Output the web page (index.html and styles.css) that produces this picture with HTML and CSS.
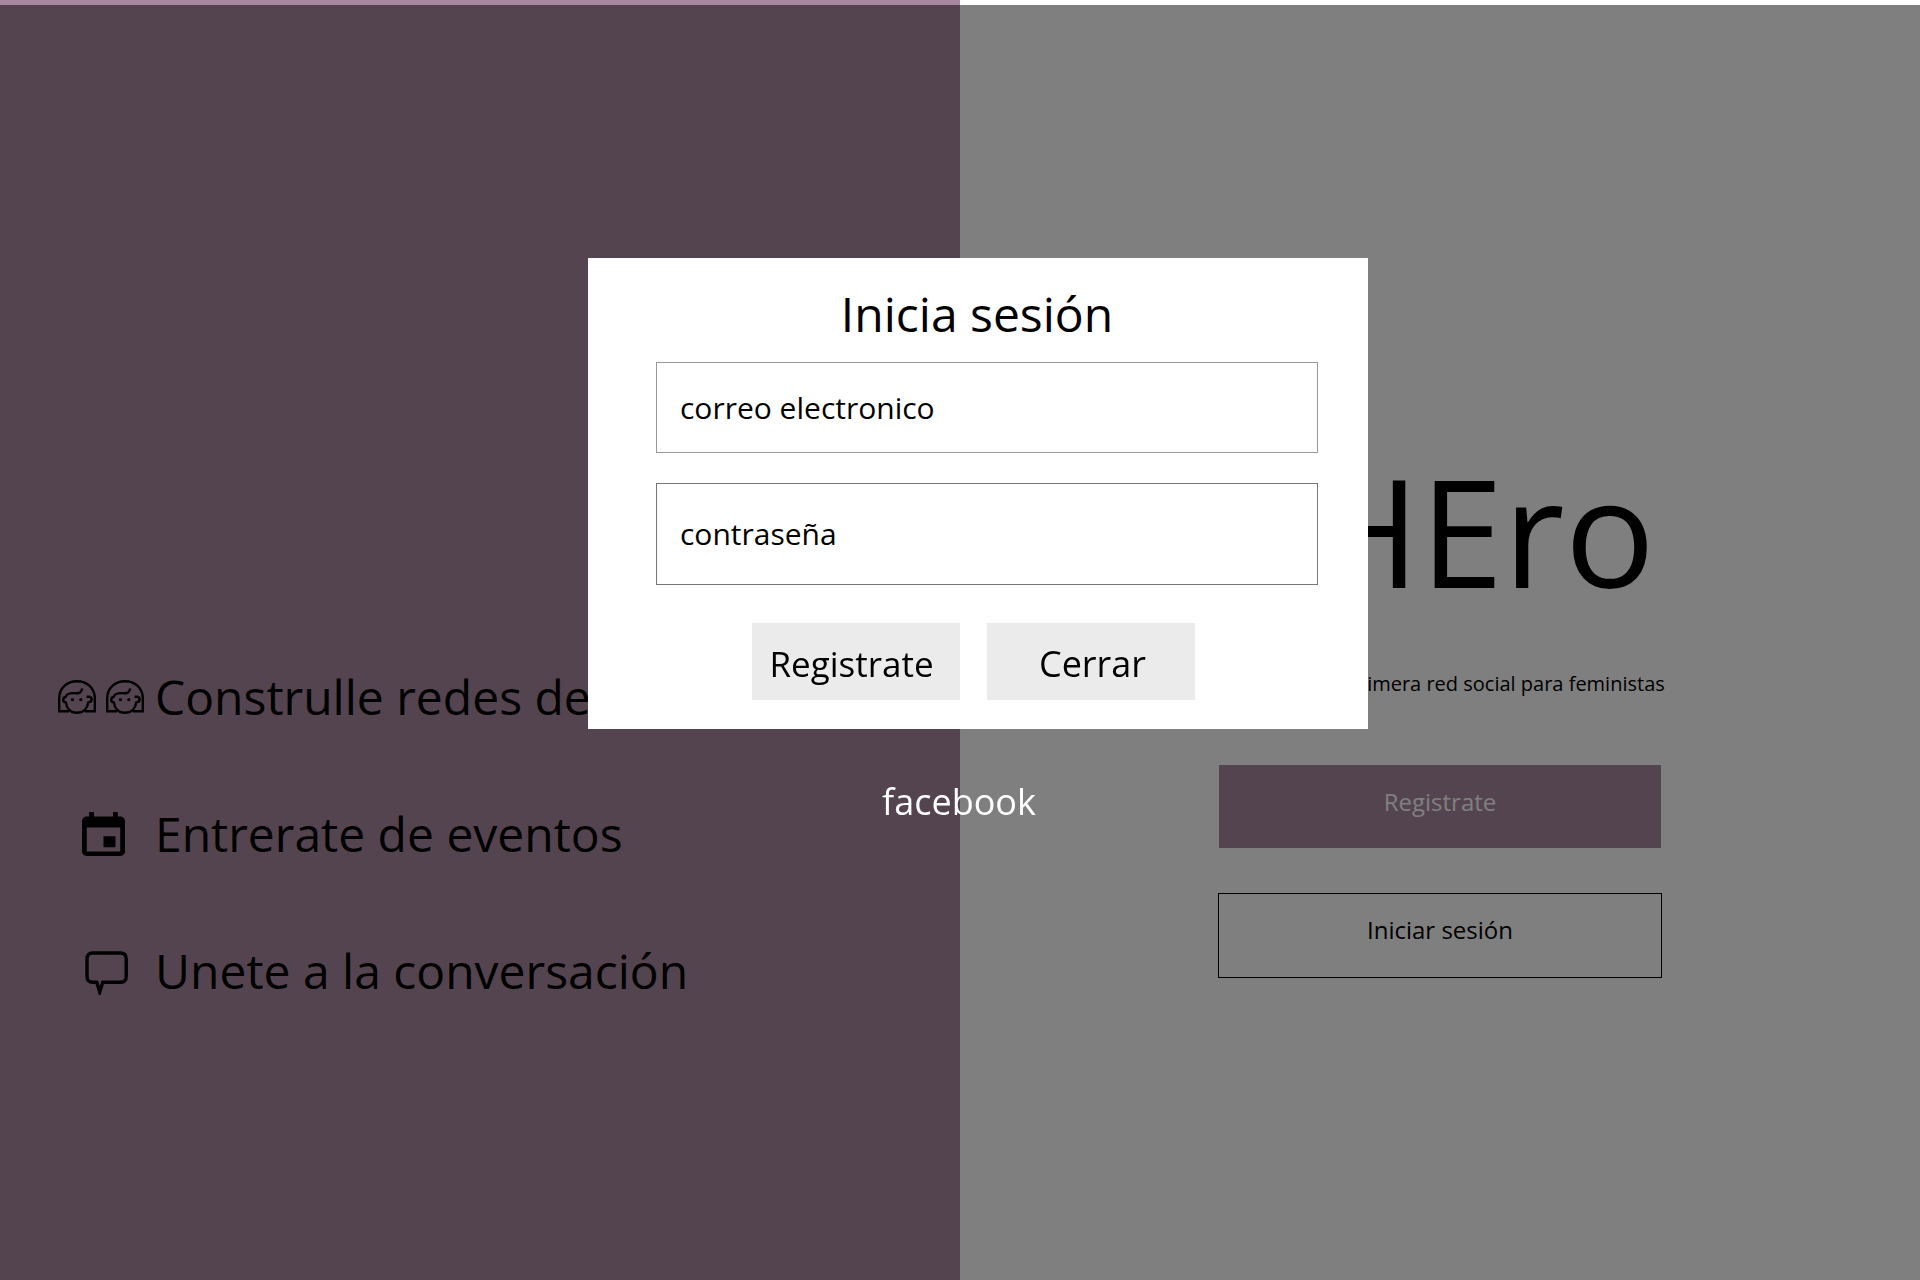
FILE: index.html
```html
<!DOCTYPE html>
<html lang="es">
<head>
<meta charset="utf-8">
<meta name="viewport" content="width=device-width, initial-scale=1">
<title>SHEro</title>
<link rel="stylesheet" href="styles.css">
</head>
<body>
<svg class="sprite" aria-hidden="true">
  <symbol id="face" viewBox="0 0 38 34">
    <g fill="none" stroke="currentColor" stroke-width="2.400">
      <path d="M11 31.200H1.200V18.500C1.200 8 9 1.200 19 1.200S36.800 8 36.800 18.500V31.200H27"/>
      <path d="M24 8.500C24 12 21.500 13.500 18 13.200C13 12.800 8.500 13 7.600 17C4.500 17.500 4.300 22 7.800 22.400C8.500 28.500 12.500 32.800 19 32.800S29.500 28.500 30.200 22.400C34.500 22.400 34.500 17 31.500 16.800H28.500" stroke-linejoin="round"/>
    </g>
    <circle cx="14.500" cy="19.700" r="1.600" fill="currentColor"/>
    <circle cx="22.800" cy="19.700" r="1.600" fill="currentColor"/>
  </symbol>
</svg>
<main class="landing">
  <section class="pitch">
    <ul class="features">
      <li class="feature">
        <span class="feature-icon feature-icon-pair">
          <svg class="face"><use href="#face"/></svg>
          <svg class="face"><use href="#face"/></svg>
        </span>
        <span>Construlle redes de apoyo</span>
      </li>
      <li class="feature">
        <span class="feature-icon">
          <svg width="43" height="44" viewBox="3 1 18 20" preserveAspectRatio="none"><path fill="currentColor" d="M17 12h-5v5h5v-5zM16 1v2H8V1H6v2H5c-1.110 0-1.990.9-1.990 2L3 19c0 1.100.89 2 2 2h14c1.100 0 2-.9 2-2V5c0-1.100-.9-2-2-2h-1V1h-2zm3 18H5V8h14v11z"/></svg>
        </span>
        <span>Entrerate de eventos</span>
      </li>
      <li class="feature">
        <span class="feature-icon feature-icon-chat">
          <svg width="43" height="44" viewBox="0 0 43 44"><path fill="none" stroke="currentColor" stroke-width="3.400" d="M7.700 2H35.500Q41.200 2 41.200 7.700V25.500Q41.200 31.200 35.500 31.200H17.800L14.700 41L11.800 31.200H7.700Q2 31.200 2 25.500V7.700Q2 2 7.700 2Z"/></svg>
        </span>
        <span>Unete a la conversación</span>
      </li>
    </ul>
  </section>
  <section class="welcome">
    <h1 class="brand">SHEro</h1>
    <p class="tagline">SHEro es la primera red social para feministas</p>
    <div class="actions">
      <button type="button" class="action action-primary">Registrate</button>
      <button type="button" class="action action-outline">Iniciar sesión</button>
    </div>
  </section>
</main>
<div class="overlay">
  <form class="modal" role="dialog" aria-labelledby="login-title">
    <h2 class="modal-title" id="login-title">Inicia sesión</h2>
    <div class="fields">
      <input class="field" type="email" placeholder="correo electronico" aria-label="correo electronico">
      <input class="field field-password" type="password" placeholder="contraseña" aria-label="contraseña">
    </div>
    <div class="modal-actions">
      <button type="button" class="modal-button modal-register">Registrate</button>
      <button type="button" class="modal-button modal-close">Cerrar</button>
    </div>
  </form>
  <a class="provider" href="#">facebook</a>
</div>
</body>
</html>
```
FILE: styles.css
```css
*, *::before, *::after { box-sizing: border-box; }

body {
  margin: 0;
  color: #000;
  background: #fff;
  font-family: "Open Sans", "Noto Sans", sans-serif;
}

h1, h2, p, ul { margin: 0; padding: 0; font-weight: 400; }
button, input { font: inherit; color: inherit; border-radius: 0; margin: 0; }
svg { display: block; }

.sprite { display: none; }

.landing {
  display: grid;
  grid-template-columns: 1fr 1fr;
  min-height: 100vh;
}

.pitch {
  background: #a8889e;
  padding: 664px 0 40px 58px;
}

.features {
  display: flex;
  flex-direction: column;
  gap: 71px;
  list-style: none;
}

.feature {
  display: flex;
  align-items: center;
  gap: 10px;
  font-size: 48px;
  line-height: 66px;
  white-space: nowrap;
}

.feature-icon {
  display: flex;
  flex: none;
  width: 87px;
  padding-left: 24px;
}

.feature-icon-pair { gap: 10px; padding-left: 0; }
.feature-icon-chat { padding: 4px 0 0 27px; }
.face { width: 38px; height: 34px; flex: none; }

.welcome {
  display: flex;
  flex-direction: column;
  align-items: center;
  padding: 428px 0 40px;
}

.brand { font-size: 150px; line-height: 204px; padding-left: 2px; }

.tagline {
  margin-top: 38px;
  padding-left: 22px;
  font-size: 20px;
  line-height: 28px;
}

.actions {
  display: flex;
  flex-direction: column;
  align-items: center;
  gap: 45px;
  width: 444px;
  margin-top: 67px;
}

.action {
  width: 100%;
  padding: 19px 0 30px;
  border: 1px solid #000;
  background: none;
  font-size: 24px;
  line-height: 34px;
}

.action-primary {
  width: 442px;
  padding-bottom: 28px;
  border-color: #a8889e;
  background: #a8889e;
  color: #fff;
}

.overlay {
  position: fixed;
  inset: 5px 0 0;
  display: flex;
  flex-direction: column;
  align-items: center;
  padding-top: 253px;
  background: rgba(0, 0, 0, 0.5);
}

.modal {
  width: 780px;
  margin-left: 36px;
  padding: 23px 50px 29px 68px;
  background: #fff;
}

.modal-title {
  padding-right: 20px;
  font-size: 48px;
  line-height: 66px;
  text-align: center;
}

.fields {
  display: flex;
  flex-direction: column;
  gap: 30px;
  margin-top: 15px;
}

.field {
  width: 100%;
  height: 91px;
  padding: 0 23px;
  border: 1px solid #999;
  background: #fff;
  font-size: 30px;
}

.field-password { height: 102px; border-color: #777; padding-bottom: 2px; }
.field::placeholder { color: #000; opacity: 1; }

.modal-actions {
  display: flex;
  justify-content: center;
  gap: 27px;
  margin-top: 38px;
  padding-right: 28px;
}

.modal-button {
  width: 208px;
  padding: 17px 0 12px;
  border: 0;
  background: #ebebeb;
  font-size: 36px;
  line-height: 48px;
}

.modal-register { padding-right: 8px; font-size: 35px; }
.modal-close { padding-left: 4px; }

.provider {
  margin-top: 49px;
  padding-right: 2px;
  color: #fff;
  font-size: 36px;
  line-height: 48px;
  text-decoration: none;
}
```
